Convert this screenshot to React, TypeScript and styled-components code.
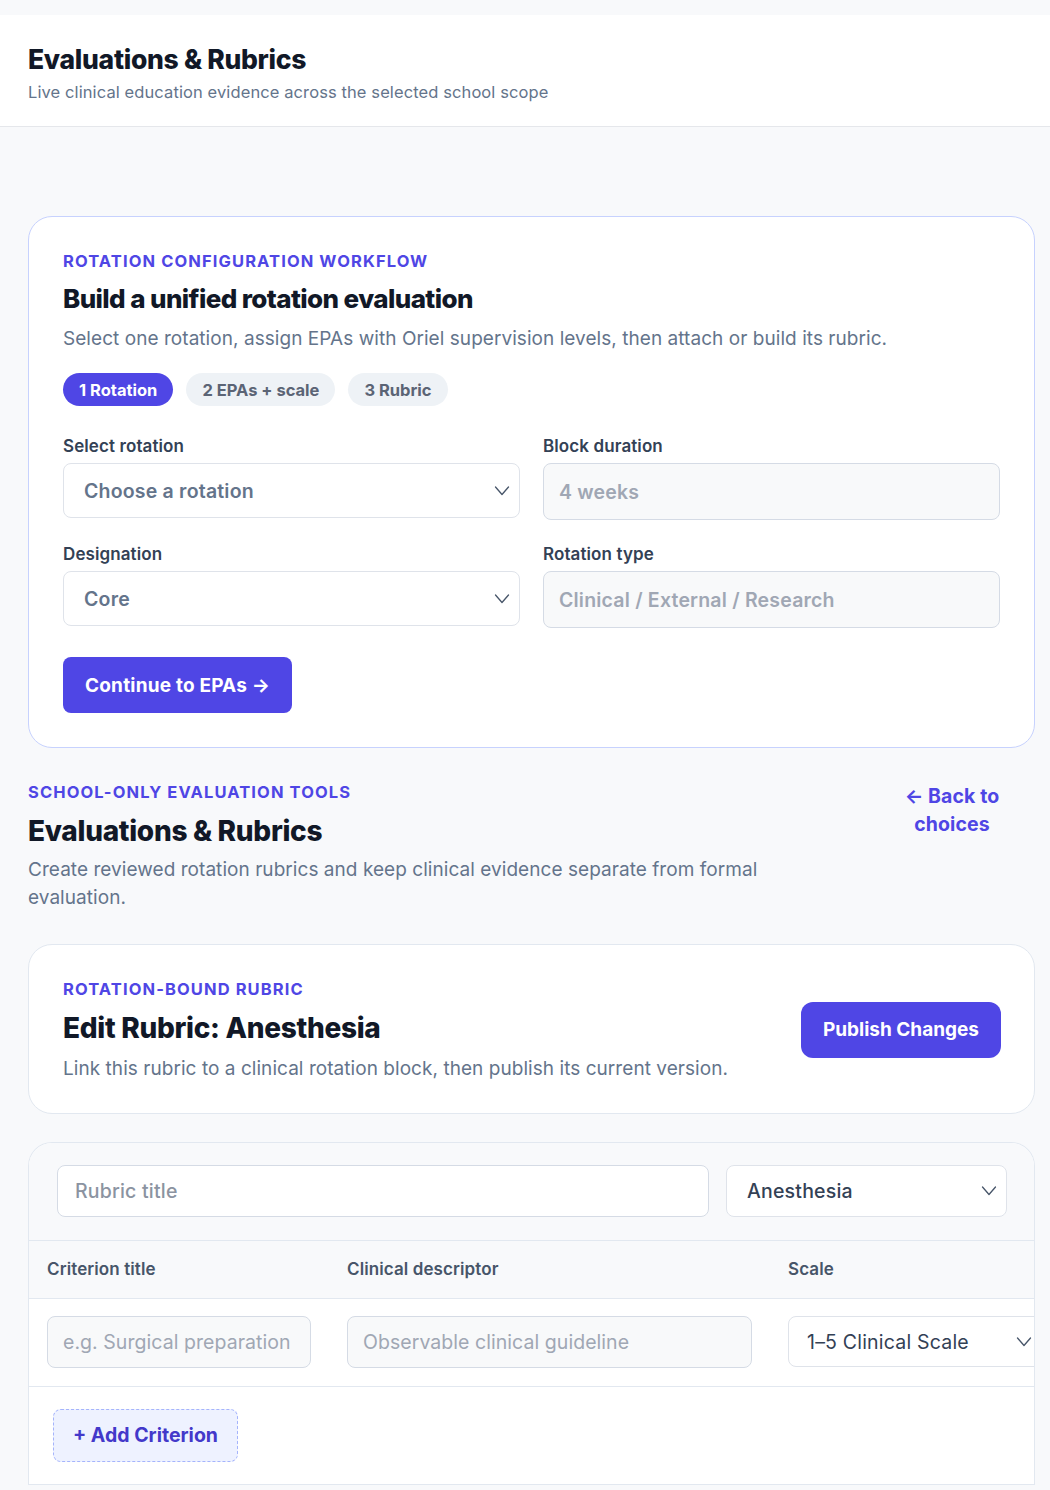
import styled, { createGlobalStyle } from "styled-components";

const GlobalStyle = createGlobalStyle`
  body {
    margin: 0;
    background: #f8f9fb;
    font-family: "Inter", "Noto Sans", sans-serif;
    color: #0f172a;
  }
  * { box-sizing: border-box; }
`;

const Chevron = () => (
  <svg width="18" height="18" viewBox="0 0 18 18" fill="none">
    <path d="M2.5 5 L9 12.5 L15.5 5" stroke="#475569" strokeWidth="1.3" strokeLinecap="round" strokeLinejoin="round" />
  </svg>
);

export default function App() {
  return (
    <>
      <GlobalStyle />
      <TopStrip />
      <Header>
        <PageTitle>Evaluations &amp; Rubrics</PageTitle>
        <PageSub>Live clinical education evidence across the selected school scope</PageSub>
      </Header>

      <Content>
        <Card $accent>
          <Eyebrow>Rotation configuration workflow</Eyebrow>
          <CardTitle>Build a unified rotation evaluation</CardTitle>
          <CardDesc>Select one rotation, assign EPAs with Oriel supervision levels, then attach or build its rubric.</CardDesc>
          <Steps>
            <Step $active>1 Rotation</Step>
            <Step>2 EPAs + scale</Step>
            <Step>3 Rubric</Step>
          </Steps>
          <FieldGrid>
            <Field>
              <Label>Select rotation</Label>
              <SelectBox $muted>
                Choose a rotation
                <Chevron />
              </SelectBox>
            </Field>
            <Field>
              <Label>Block duration</Label>
              <ReadOnly>4 weeks</ReadOnly>
            </Field>
            <Field>
              <Label>Designation</Label>
              <SelectBox $muted>
                Core
                <Chevron />
              </SelectBox>
            </Field>
            <Field>
              <Label>Rotation type</Label>
              <ReadOnly>Clinical / External / Research</ReadOnly>
            </Field>
          </FieldGrid>
          <PrimaryButton>Continue to EPAs →</PrimaryButton>
        </Card>

        <SectionHead>
          <SectionText>
            <Eyebrow>School-only evaluation tools</Eyebrow>
            <SectionTitle>Evaluations &amp; Rubrics</SectionTitle>
            <SectionDesc>Create reviewed rotation rubrics and keep clinical evidence separate from formal evaluation.</SectionDesc>
          </SectionText>
          <BackLink>← Back to choices</BackLink>
        </SectionHead>

        <EditCard>
          <div>
            <Eyebrow>Rotation-bound rubric</Eyebrow>
            <SectionTitle>Edit Rubric: Anesthesia</SectionTitle>
            <CardDesc>Link this rubric to a clinical rotation block, then publish its current version.</CardDesc>
          </div>
          <PublishButton>Publish Changes</PublishButton>
        </EditCard>

        <TableCard>
          <TopInputs>
            <TextInput>Rubric title</TextInput>
            <SelectBox $height={52}>
              Anesthesia
              <Chevron />
            </SelectBox>
          </TopInputs>
          <Table>
            <colgroup>
              <col style={{ width: 300 }} />
              <col style={{ width: 441 }} />
              <col style={{ width: 290 }} />
            </colgroup>
            <thead>
              <tr>
                <Th>Criterion title</Th>
                <Th>Clinical descriptor</Th>
                <Th>Scale</Th>
              </tr>
            </thead>
            <tbody>
              <tr>
                <Td>
                  <CellInput>e.g. Surgical preparation</CellInput>
                </Td>
                <Td>
                  <CellInput>Observable clinical guideline</CellInput>
                </Td>
                <Td>
                  <ScaleSelect>
                    1–5 Clinical Scale
                    <Chevron />
                  </ScaleSelect>
                </Td>
              </tr>
            </tbody>
          </Table>
          <AddRow>
            <AddButton>+ Add Criterion</AddButton>
          </AddRow>
        </TableCard>
      </Content>
    </>
  );
}

const TopStrip = styled.div`
  height: 15px;
  background: #f8f9fb;
`;

const Header = styled.header`
  background: #fff;
  border-bottom: 1px solid #e5e7eb;
  padding: 26px 28px 22px;
`;

const PageTitle = styled.h1`
  margin: 0;
  font-size: 26.5px;
  font-weight: 800;
  letter-spacing: -0.3px;
  line-height: 36px;
  color: #111827;
`;

const PageSub = styled.p`
  margin: 3px 0 0;
  font-size: 16.5px;
  line-height: 24px;
  color: #64748b;
  letter-spacing: 0.1px;
`;

const Content = styled.main`
  padding: 89px 15px 0 28px;
`;

const Card = styled.section<{ $accent?: boolean }>`
  background: #fff;
  border: 1px solid ${(p) => (p.$accent ? "#c7d2fe" : "#e2e8f0")};
  border-radius: 24px;
  padding: 32px 34px 34px;
`;

const Eyebrow = styled.div`
  font-size: 16.5px;
  font-weight: 700;
  text-transform: uppercase;
  letter-spacing: 1.1px;
  color: #4f46e5;
  line-height: 24px;
`;

const CardTitle = styled.h2`
  margin: 10px 0 0;
  font-size: 26px;
  font-weight: 800;
  letter-spacing: -0.6px;
  line-height: 32px;
  color: #111827;
`;

const CardDesc = styled.p`
  margin: 11px 0 0;
  font-size: 19px;
  line-height: 26px;
  color: #64748b;
  letter-spacing: 0.05px;
`;

const Steps = styled.div`
  display: flex;
  gap: 13px;
  margin-top: 21px;
`;

const Step = styled.span<{ $active?: boolean }>`
  height: 33px;
  padding: 0 16px;
  border-radius: 999px;
  display: inline-flex;
  align-items: center;
  font-size: 16.5px;
  font-weight: 700;
  letter-spacing: 0;
  background: ${(p) => (p.$active ? "#4f46e5" : "#eef2f6")};
  color: ${(p) => (p.$active ? "#fff" : "#5b6475")};
`;

const FieldGrid = styled.div`
  display: grid;
  grid-template-columns: 1fr 1fr;
  column-gap: 23px;
  row-gap: 23px;
  margin-top: 29px;
`;

const Field = styled.div`
  display: flex;
  flex-direction: column;
  gap: 6px;
`;

const Label = styled.label`
  font-size: 17px;
  font-weight: 600;
  color: #334155;
  letter-spacing: 0.1px;
  line-height: 22px;
`;

const SelectBox = styled.div<{ $muted?: boolean; $height?: number }>`
  height: ${(p) => p.$height ?? 55}px;
  border: 1px solid #dfe3ea;
  border-radius: 8px;
  background: #fff;
  padding: 0 8px 0 20px;
  display: flex;
  align-items: center;
  justify-content: space-between;
  font-size: 19.5px;
  font-weight: ${(p) => (p.$muted ? 600 : 500)};
  letter-spacing: 0.2px;
  color: ${(p) => (p.$muted ? "#64748b" : "#334155")};
`;

const ReadOnly = styled.div`
  height: 57px;
  border: 1px solid #d5dbe5;
  border-radius: 8px;
  background: #f8f9fa;
  padding: 0 15px;
  display: flex;
  align-items: center;
  font-size: 19.5px;
  font-weight: 600;
  letter-spacing: 0.2px;
  color: #a0a7b4;
`;

const PrimaryButton = styled.button`
  margin-top: 29px;
  height: 56px;
  padding: 0 22px;
  border: none;
  border-radius: 8px;
  background: #4f46e5;
  color: #fff;
  font-family: inherit;
  font-size: 19px;
  font-weight: 700;
  letter-spacing: 0.2px;
`;

const SectionHead = styled.div`
  display: flex;
  justify-content: space-between;
  align-items: flex-start;
  padding: 32px 0 0;
`;

const SectionText = styled.div`
  max-width: 760px;
`;

const SectionTitle = styled.h2`
  margin: 10px 0 0;
  font-size: 28px;
  font-weight: 800;
  letter-spacing: -0.3px;
  line-height: 34px;
  color: #111827;
`;

const SectionDesc = styled.p`
  margin: 8px 0 0;
  font-size: 19px;
  line-height: 28px;
  color: #64748b;
  letter-spacing: 0.05px;
`;

const BackLink = styled.a`
  width: 120px;
  margin: 2px 23px 0 0;
  text-align: center;
  font-size: 19.5px;
  font-weight: 700;
  line-height: 28px;
  letter-spacing: 0.1px;
  color: #4f46e5;
`;

const EditCard = styled.section`
  margin-top: 32px;
  background: #fff;
  border: 1px solid #e2e8f0;
  border-radius: 24px;
  padding: 32px 33px 31px 34px;
  display: flex;
  align-items: center;
  justify-content: space-between;
`;

const PublishButton = styled.button`
  height: 56px;
  padding: 0 22px;
  border: none;
  border-radius: 12px;
  background: #4f46e5;
  color: #fff;
  font-family: inherit;
  font-size: 19px;
  font-weight: 700;
  letter-spacing: 0;
`;

const TableCard = styled.section`
  margin-top: 28px;
  background: #fff;
  border: 1px solid #e2e8f0;
  border-bottom: none;
  border-radius: 24px 24px 0 0;
  overflow: hidden;
`;

const TopInputs = styled.div`
  display: grid;
  grid-template-columns: 652px 281px;
  gap: 17px;
  padding: 22px 28px 23px 28px;
  background: #f8f9fb;
  border-bottom: 1px solid #e2e8f0;
`;

const TextInput = styled.div`
  height: 52px;
  border: 1px solid #d5dbe5;
  border-radius: 8px;
  background: #fff;
  padding: 0 17px;
  display: flex;
  align-items: center;
  font-size: 19.5px;
  font-weight: 500;
  letter-spacing: 0.2px;
  color: #8b93a1;
`;

const Table = styled.table`
  border-collapse: collapse;
  table-layout: fixed;
  width: 1031px;
`;

const Th = styled.th`
  text-align: left;
  height: 57px;
  padding: 0 18px;
  background: #f8f9fb;
  border-bottom: 1px solid #e2e8f0;
  font-size: 17px;
  font-weight: 600;
  letter-spacing: 0.1px;
  color: #475569;
`;

const Td = styled.td`
  padding: 17px 18px 18px;
  border-bottom: 1px solid #e2e8f0;
`;

const CellInput = styled.div`
  height: 52px;
  border: 1px solid #d5dbe5;
  border-radius: 8px;
  background: #f8f9fa;
  padding: 0 15px;
  display: flex;
  align-items: center;
  font-size: 19.5px;
  letter-spacing: 0.05px;
  color: #a0a7b4;
  white-space: nowrap;
  overflow: hidden;
`;

const ScaleSelect = styled.div`
  height: 51px;
  border: 1px solid #dfe3ea;
  border-radius: 8px;
  background: #fff;
  padding: 0 8px 0 18px;
  display: flex;
  align-items: center;
  justify-content: space-between;
  font-size: 19.5px;
  letter-spacing: 0.2px;
  color: #334155;
  white-space: nowrap;
`;

const AddRow = styled.div`
  padding: 22px 24px 22px;
  border-bottom: 1px solid #e2e8f0;
`;

const AddButton = styled.button`
  height: 53px;
  padding: 0 19px;
  border: 1px dashed #a5b4fc;
  border-radius: 8px;
  background: #eef2ff;
  color: #4338ca;
  font-family: inherit;
  font-size: 19.5px;
  font-weight: 700;
  letter-spacing: 0;
`;
